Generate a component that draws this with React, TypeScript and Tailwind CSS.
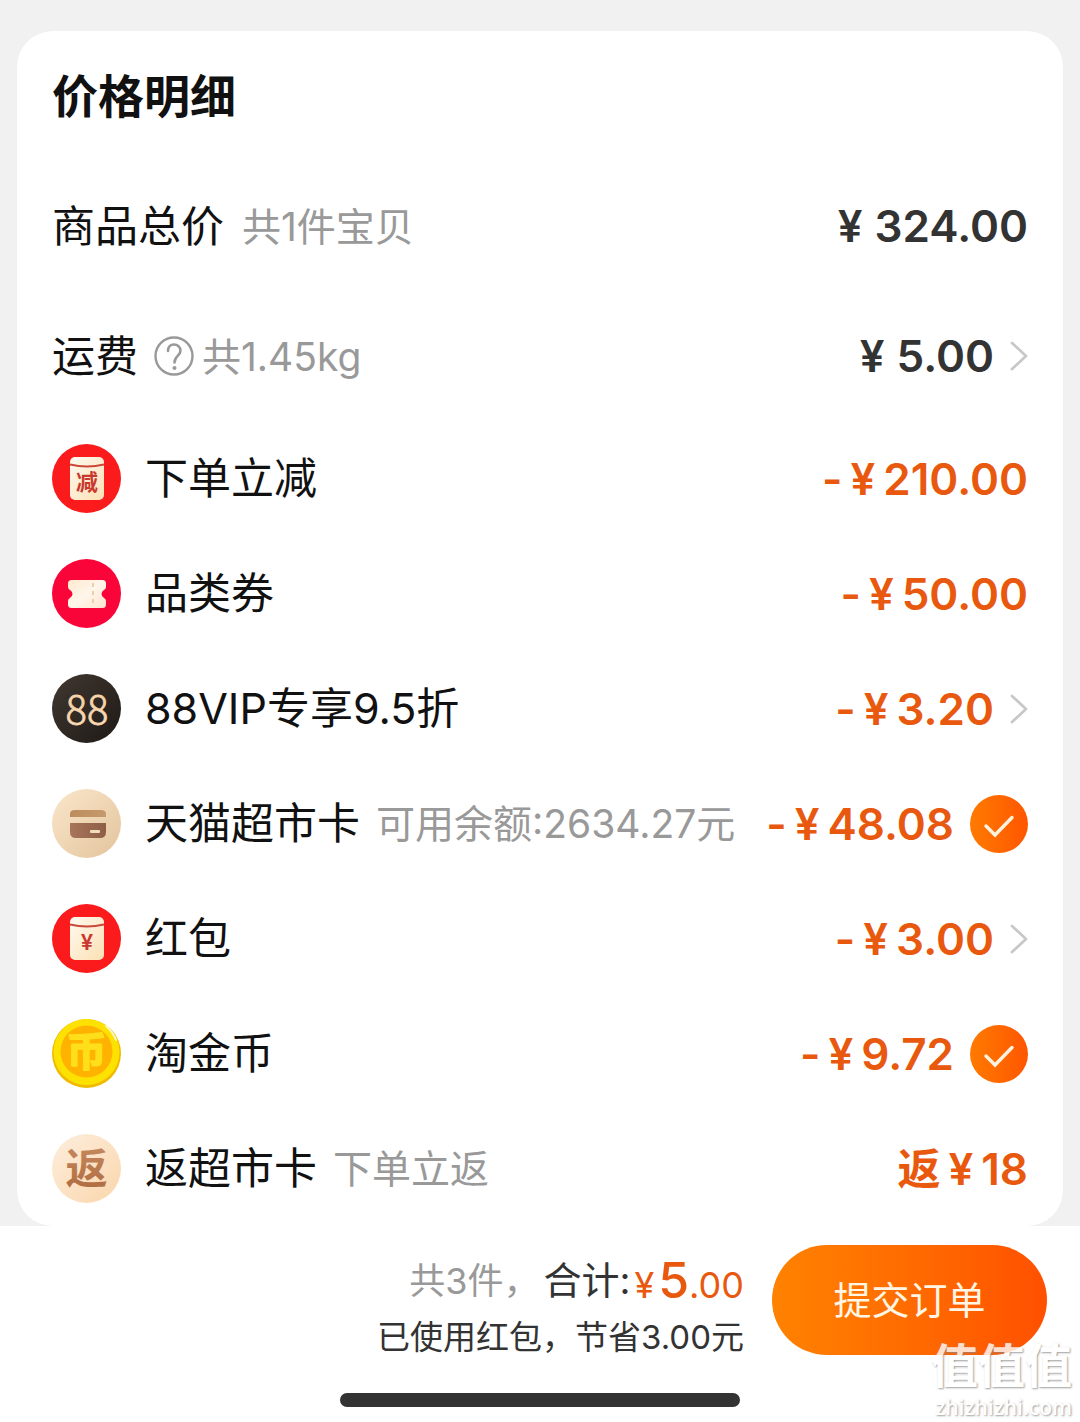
import React from 'react';

type Action = 'link' | 'check';

interface PriceRow {
  id: string;
  label: string;
  note?: string;
  prefix?: string;
  amount: string;
  icon: React.ReactNode;
  action?: Action;
}

const Packet = ({ id, mark }: { id: string; mark: string }) => (
  <svg viewBox="0 0 69 69" className="h-full w-full" aria-hidden="true">
    <defs>
      <linearGradient id={id} x1="0" y1="0" x2="1" y2="1">
        <stop offset="0" stopColor="#fffaf0" />
        <stop offset="1" stopColor="#fbe0b4" />
      </linearGradient>
    </defs>
    <circle cx="34.5" cy="34.5" r="34.5" fill="#fb1a1c" />
    <rect x="18" y="13" width="34" height="43" rx="5" fill={`url(#${id})`} />
    <path d="M18 20.500Q35 24.500 52 20.500" fill="none" stroke="#c9493a" strokeWidth="2" />
    <text
      x="35"
      y="46"
      textAnchor="middle"
      fontSize="22"
      fontWeight="600"
      fill="#c9382e"
      fontFamily="Inter, 'Noto Sans CJK SC', sans-serif"
    >
      {mark}
    </text>
  </svg>
);

const Ticket = () => (
  <svg viewBox="0 0 69 69" className="h-full w-full" aria-hidden="true">
    <defs>
      <linearGradient id="ticket" x1="0" y1="0" x2="1" y2="1">
        <stop offset="0" stopColor="#ffe9cf" />
        <stop offset="0.5" stopColor="#fff6ea" />
        <stop offset="1" stopColor="#ffe2cf" />
      </linearGradient>
    </defs>
    <circle cx="34.5" cy="34.5" r="34.5" fill="#f90539" />
    <path
      d="M19.500 21H50.500Q54 21 54 24.500V28Q54 30 52 31Q49.500 32.500 49.500 35T52 39Q54 40 54 42V45.500Q54 49 50.500 49H19.500Q16 49 16 45.500V42Q16 40 18 39Q20.500 37.500 20.500 35T18 31Q16 30 16 28V24.500Q16 21 19.500 21Z"
      fill="url(#ticket)"
    />
    <path d="M41 24V48" stroke="#ecc9a4" strokeWidth="1.8" strokeDasharray="4 4" />
  </svg>
);

const Vip = () => (
  <svg viewBox="0 0 69 69" className="h-full w-full" aria-hidden="true">
    <defs>
      <linearGradient id="vip-bg" x1="0" y1="0" x2="1" y2="1">
        <stop offset="0" stopColor="#40372f" />
        <stop offset="1" stopColor="#1f1a18" />
      </linearGradient>
      <linearGradient id="vip-gold" x1="0" y1="0" x2="0" y2="1">
        <stop offset="0" stopColor="#f3c99a" />
        <stop offset="1" stopColor="#fce3c3" />
      </linearGradient>
    </defs>
    <circle cx="34.5" cy="34.5" r="34.5" fill="url(#vip-bg)" />
    <text
      x="35"
      y="50"
      textAnchor="middle"
      fontSize="40"
      fill="url(#vip-gold)"
      fontFamily="'Noto Sans CJK SC', sans-serif"
      fontWeight="300"
      stroke="#f7d5ab"
      strokeWidth="0.8"
    >
      88
    </text>
  </svg>
);

const MarketCard = () => (
  <svg viewBox="0 0 69 69" className="h-full w-full" aria-hidden="true">
    <defs>
      <linearGradient id="card-bg" x1="0" y1="0" x2="1" y2="1">
        <stop offset="0" stopColor="#fae6cb" />
        <stop offset="1" stopColor="#e3c49c" />
      </linearGradient>
      <linearGradient id="card-top" x1="0" y1="0" x2="1" y2="0">
        <stop offset="0" stopColor="#bd8c5c" />
        <stop offset="1" stopColor="#c59a6c" />
      </linearGradient>
      <linearGradient id="card-bottom" x1="0" y1="0" x2="1" y2="0">
        <stop offset="0" stopColor="#a8755a" />
        <stop offset="1" stopColor="#8d5e46" />
      </linearGradient>
    </defs>
    <circle cx="34.5" cy="34.5" r="34.5" fill="url(#card-bg)" />
    <path d="M18 28V25Q18 21 23 21H49Q54 21 54 25V28Z" fill="url(#card-top)" />
    <path d="M18 34H54V43Q54 49 48 49H24Q18 49 18 43Z" fill="url(#card-bottom)" />
    <rect x="38" y="41" width="10" height="3" rx="1" fill="#f3dcc0" />
  </svg>
);

const Coin = () => (
  <svg viewBox="0 0 69 69" className="h-full w-full" aria-hidden="true">
    <circle cx="34.5" cy="34.5" r="34.5" fill="#eebb00" />
    <circle cx="34.5" cy="33" r="33" fill="#fde100" />
    <circle cx="34.5" cy="32.500" r="26" fill="#ffb300" />
    <path d="M54 7Q61 13 64 21" fill="none" stroke="#fff7c2" strokeWidth="2" strokeLinecap="round" />
    <text
      x="34.5"
      y="47"
      textAnchor="middle"
      fontSize="40"
      fontWeight="700"
      fill="#ffdf1a"
      stroke="#ffdf1a"
      strokeWidth="1.6"
      strokeLinejoin="round"
      fontFamily="'Noto Sans CJK SC', sans-serif"
    >
      币
    </text>
  </svg>
);

const Rebate = () => (
  <svg viewBox="0 0 69 69" className="h-full w-full" aria-hidden="true">
    <defs>
      <linearGradient id="rebate-bg" x1="0" y1="0" x2="1" y2="1">
        <stop offset="0" stopColor="#fdeedd" />
        <stop offset="1" stopColor="#fad6ac" />
      </linearGradient>
      <linearGradient id="rebate-text" x1="0" y1="0" x2="0" y2="1">
        <stop offset="0" stopColor="#c98f62" />
        <stop offset="1" stopColor="#ad683f" />
      </linearGradient>
    </defs>
    <circle cx="34.5" cy="34.5" r="34.5" fill="url(#rebate-bg)" />
    <text
      x="34.5"
      y="50"
      textAnchor="middle"
      fontSize="42"
      fontWeight="700"
      fill="url(#rebate-text)"
      fontFamily="'Noto Sans CJK SC', sans-serif"
    >
      返
    </text>
  </svg>
);

const Chevron = () => (
  <svg viewBox="0 0 18 30" className="h-[30px] w-[18px]" fill="none" aria-hidden="true">
    <path d="M2 2L16 15L2 28" stroke="#c8c8c8" strokeWidth="2.8" strokeLinecap="round" strokeLinejoin="round" />
  </svg>
);

const Help = () => (
  <svg viewBox="0 0 40 40" className="h-10 w-10" fill="none" stroke="#999" strokeLinecap="round" aria-hidden="true">
    <circle cx="20" cy="20" r="18.5" strokeWidth="2.4" />
    <path d="M14 15C14 11 16.500 8.500 20 8.500S26.500 11 26.500 14.800C26.500 19.500 20.500 20 20.500 26.500" strokeWidth="2.6" />
    <circle cx="20.500" cy="32" r="2" fill="#999" stroke="none" />
  </svg>
);

const rows: PriceRow[] = [
  { id: 'instant', label: '下单立减', prefix: '-', amount: '210.00', icon: <Packet id="packet-off" mark="减" /> },
  { id: 'coupon', label: '品类券', prefix: '-', amount: '50.00', icon: <Ticket /> },
  { id: 'vip', label: '88VIP专享9.5折', prefix: '-', amount: '3.20', icon: <Vip />, action: 'link' },
  {
    id: 'market-card',
    label: '天猫超市卡',
    note: '可用余额:2634.27元',
    prefix: '-',
    amount: '48.08',
    icon: <MarketCard />,
    action: 'check',
  },
  { id: 'packet', label: '红包', prefix: '-', amount: '3.00', icon: <Packet id="packet-yuan" mark="¥" />, action: 'link' },
  { id: 'coin', label: '淘金币', prefix: '-', amount: '9.72', icon: <Coin />, action: 'check' },
  { id: 'rebate', label: '返超市卡', note: '下单立返', prefix: '返', amount: '18', icon: <Rebate /> },
];

const Price = ({ prefix, amount }: { prefix?: string; amount: string }) => (
  <span
    className={
      prefix
        ? 'flex items-baseline gap-2 text-[44px] font-semibold text-[#e8590f]'
        : 'flex items-baseline gap-3 text-[44px] font-semibold text-[#333]'
    }
  >
    {prefix && <span className={prefix === '-' ? '' : 'text-[43px]'}>{prefix}</span>}
    <span>¥</span>
    <span>{amount}</span>
  </span>
);

const Row = ({ row }: { row: PriceRow }) => {
  const { id, label, note, prefix, amount, icon, action } = row;
  return (
    <li className="flex h-[115px] items-center justify-between">
      <label htmlFor={action === 'check' ? id : undefined} className="flex items-center">
        <span className="mr-6 h-[69px] w-[69px] shrink-0">{icon}</span>
        <span className="text-[43px] text-[#111]">{label}</span>
        {note && <span className="ml-4 text-[39px] text-[#999]">{note}</span>}
      </label>
      {action === 'link' ? (
        <button type="button" className="flex items-center gap-4">
          <Price prefix={prefix} amount={amount} />
          <Chevron />
        </button>
      ) : (
        <span className="flex items-center gap-4">
          <Price prefix={prefix} amount={amount} />
          {action === 'check' && (
            <span className="relative h-[58px] w-[58px]">
              <input
                id={id}
                type="checkbox"
                defaultChecked
                className="peer h-full w-full appearance-none rounded-full border-2 border-gray-300 checked:border-0 checked:bg-linear-to-r checked:from-[#ff7a00] checked:to-[#ff5500]"
              />
              <svg
                viewBox="0 0 58 58"
                fill="none"
                className="pointer-events-none absolute inset-0 hidden peer-checked:block"
                aria-hidden="true"
              >
                <path d="M16 31L25 40L42 22.500" stroke="#fff3e0" strokeWidth="3.4" strokeLinecap="round" />
              </svg>
            </span>
          )}
        </span>
      )}
    </li>
  );
};

export default function App() {
  return (
    <div className="relative min-h-screen bg-[#f1f1f1] font-['Inter','Noto_Sans_CJK_SC',sans-serif] leading-none">
      <main className="px-[17px] pt-[31px]">
        <section className="rounded-[36px] bg-white px-[35px]">
          <h1 className="flex h-[130px] items-center text-[46px] font-bold text-[#111]">价格明细</h1>

          <ul>
            <li className="flex h-[130px] items-center justify-between">
              <span className="flex items-center gap-[18px]">
                <span className="text-[43px] text-[#111]">商品总价</span>
                <span className="text-[39px] text-[#999]">共1件宝贝</span>
              </span>
              <Price amount="324.00" />
            </li>
            <li className="flex h-[130px] items-center justify-between">
              <span className="flex items-center">
                <span className="text-[43px] text-[#111]">运费</span>
                <button type="button" aria-label="运费说明" className="mr-2 ml-4">
                  <Help />
                </button>
                <span className="text-[39px] text-[#999]">共1.45kg</span>
              </span>
              <button type="button" className="flex items-center gap-4">
                <Price amount="5.00" />
                <Chevron />
              </button>
            </li>
            {rows.map((row) => (
              <Row key={row.id} row={row} />
            ))}
          </ul>
        </section>
      </main>

      <footer className="h-[196px] bg-white pt-[19px]">
        <div className="flex items-center justify-end gap-7 pr-[33px]">
          <div className="flex flex-col items-end gap-4 pt-2 text-[#333]">
            <p className="flex items-center">
              <span className="flex items-baseline">
                <span className="text-[36px] text-[#999]">共3件，</span>
                <span className="ml-1 text-[38px]">合计:</span>
              </span>
              <span className="ml-1 flex items-baseline text-[36px] text-[#e8590f]">
                <span>¥</span>
                <span className="ml-1 text-[50px] font-medium">5</span>
                <span>.00</span>
              </span>
            </p>
            <p className="text-[33px]">已使用红包，节省3.00元</p>
          </div>
          <button
            type="button"
            className="h-[110px] w-[275px] rounded-full bg-linear-to-r from-[#ff8200] to-[#ff5000] text-[38px] text-[#fff6e6]"
          >
            提交订单
          </button>
        </div>
        {/* home indicator */}
        <div className="mx-auto mt-[38px] h-[14px] w-[400px] rounded-full bg-[#333]" />
      </footer>

      {/* watermark */}
      <div className="pointer-events-none absolute right-2 bottom-1 flex flex-col items-end gap-2 text-white opacity-80 [text-shadow:1px_1px_2px_#888]">
        <span className="text-[47px] font-bold">值值值</span>
        <span className="font-['Open_Sans'] text-[21px] font-semibold">zhizhizhi.com</span>
      </div>
    </div>
  );
}
